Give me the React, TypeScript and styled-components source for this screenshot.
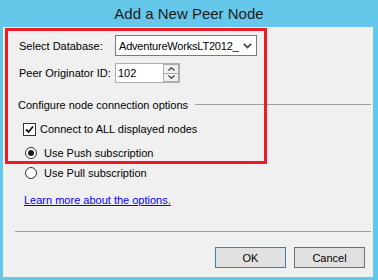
import React from "react";
import styled, { createGlobalStyle } from "styled-components";

const Global = createGlobalStyle`
  html, body { margin: 0; padding: 0; background: #65c8ea; }
  body { font-family: "Liberation Sans", Arial, sans-serif; }
`;

const Frame = styled.div`
  width: 378px;
  height: 280px;
  box-sizing: border-box;
  background: #65c8ea;
  padding: 0 5px 3px 3px;
  display: flex;
  flex-direction: column;
`;

const TitleBar = styled.div`
  height: 27px;
  display: flex;
  align-items: center;
  justify-content: center;
  font-size: 15px;
  color: #1b1b1b;
  padding-left: 2px;
`;

const Content = styled.div`
  position: relative;
  flex: 1;
  background: #f0f0f0;
  display: flex;
  flex-direction: column;
  font-size: 11px;
  color: #000;
  padding: 8px 8px 0 16px;
`;

const Row = styled.div<{ $mt?: number; $h: number; $pl?: number }>`
  display: flex;
  align-items: center;
  height: ${(p) => p.$h}px;
  margin-top: ${(p) => p.$mt ?? 0}px;
  padding-left: ${(p) => p.$pl ?? 0}px;
`;

const Label = styled.span`
  width: 96px;
  flex: none;
  white-space: nowrap;
`;

const Select = styled.div`
  width: 142px;
  height: 21px;
  box-sizing: border-box;
  border: 1px solid #7a7a7a;
  background: #fff;
  display: flex;
  align-items: center;
  justify-content: space-between;
  padding: 0 0 0 3px;
`;

const SelectText = styled.span`
  white-space: nowrap;
  letter-spacing: -0.2px;
`;

const Chevron = styled.span`
  width: 17px;
  flex: none;
  display: flex;
  align-items: center;
  justify-content: center;
`;

const Spin = styled.div`
  width: 65px;
  height: 20px;
  box-sizing: border-box;
  border: 1px solid #abadb3;
  background: #fff;
  display: flex;
`;

const SpinText = styled.span`
  flex: 1;
  padding-left: 2px;
  display: flex;
  align-items: center;
`;

const SpinButtons = styled.div`
  width: 16px;
  display: flex;
  flex-direction: column;
`;

const SpinButton = styled.div`
  flex: 1;
  border: 1px solid #acacac;
  background: #f0f0f0;
  display: flex;
  align-items: center;
  justify-content: center;
  & + & { border-top: none; }
`;

const GroupHeader = styled.div`
  display: flex;
  align-items: center;
  height: 15px;
  margin-top: 14px;
  margin-left: -1px;
  gap: 7px;
`;

const Rule = styled.div`
  flex: 1;
  height: 1px;
  background: #a0a0a0;
  margin-right: -6px;
`;

const CheckBox = styled.span`
  width: 13px;
  height: 13px;
  box-sizing: border-box;
  border: 1px solid #333;
  background: #fff;
  display: flex;
  align-items: center;
  justify-content: center;
  margin-right: 4px;
`;

const Radio = styled.span<{ $checked?: boolean }>`
  width: 12px;
  height: 12px;
  box-sizing: border-box;
  border-radius: 50%;
  border: 1px solid #333;
  background: #fff;
  display: flex;
  align-items: center;
  justify-content: center;
  margin-right: 7px;
  &::after {
    content: "";
    display: ${(p) => (p.$checked ? "block" : "none")};
    width: 6px;
    height: 6px;
    border-radius: 50%;
    background: #1a1a1a;
  }
`;

const Link = styled.a`
  color: #0000ff;
  text-decoration: underline;
  margin-top: 13px;
  margin-left: 5px;
  line-height: 14px;
  align-self: flex-start;
`;

const Separator = styled.div`
  height: 1px;
  background: #a0a0a0;
  margin: 24px -6px 0 -4px;
`;

const Buttons = styled.div`
  display: flex;
  justify-content: flex-end;
  gap: 8px;
  margin-top: 15px;
`;

const Button = styled.button<{ $default?: boolean }>`
  width: 71px;
  height: 21px;
  box-sizing: border-box;
  border: 1px solid ${(p) => (p.$default ? "#3c7fb1" : "#707070")};
  background: #e1e1e1;
  font-family: inherit;
  font-size: 11px;
  color: #000;
  padding: 0;
`;

const Highlight = styled.div`
  position: absolute;
  left: 2px;
  top: 1px;
  width: 262px;
  height: 136px;
  box-sizing: border-box;
  border: 3px solid #ed1c24;
  pointer-events: none;
`;

export default function App() {
  return (
    <>
      <Global />
      <Frame>
        <TitleBar>Add a New Peer Node</TitleBar>
        <Content>
          <Row $h={21}>
            <Label>Select Database:</Label>
            <Select>
              <SelectText>AdventureWorksLT2012_</SelectText>
              <Chevron>
                <svg width="9" height="6" viewBox="0 0 9 6">
                  <path d="M0.8 0.8 L4.5 4.5 L8.2 0.8" fill="none" stroke="#505050" strokeWidth="1.8" />
                </svg>
              </Chevron>
            </Select>
          </Row>
          <Row $h={20} $mt={7}>
            <Label>Peer Originator ID:</Label>
            <Spin>
              <SpinText>102</SpinText>
              <SpinButtons>
                <SpinButton>
                  <svg width="7" height="4" viewBox="0 0 7 4">
                    <path d="M0.5 3.5 L3.5 0.7 L6.5 3.5" fill="none" stroke="#333" strokeWidth="1.1" />
                  </svg>
                </SpinButton>
                <SpinButton>
                  <svg width="7" height="4" viewBox="0 0 7 4">
                    <path d="M0.5 0.5 L3.5 3.3 L6.5 0.5" fill="none" stroke="#333" strokeWidth="1.1" />
                  </svg>
                </SpinButton>
              </SpinButtons>
            </Spin>
          </Row>
          <GroupHeader>
            <span>Configure node connection options</span>
            <Rule />
          </GroupHeader>
          <Row $h={16} $mt={9} $pl={4}>
            <CheckBox>
              <svg width="9" height="9" viewBox="0 0 9 9">
                <path d="M1 4.5 L3.5 7 L8 1.5" fill="none" stroke="#111" strokeWidth="1.8" />
              </svg>
            </CheckBox>
            <span>Connect to ALL displayed nodes</span>
          </Row>
          <Row $h={15} $mt={8} $pl={6}>
            <Radio $checked />
            <span>Use Push subscription</span>
          </Row>
          <Row $h={15} $mt={5} $pl={6}>
            <Radio />
            <span>Use Pull subscription</span>
          </Row>
          <Link href="#">Learn more about the options.</Link>
          <Separator />
          <Buttons>
            <Button $default>OK</Button>
            <Button>Cancel</Button>
          </Buttons>
          <Highlight />
        </Content>
      </Frame>
    </>
  );
}
